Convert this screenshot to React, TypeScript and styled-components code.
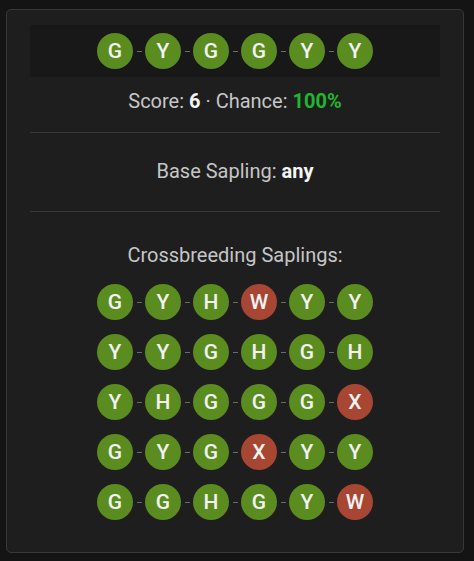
import * as React from "react";
import styled, { createGlobalStyle } from "styled-components";

const GlobalStyle = createGlobalStyle`
  html, body {
    margin: 0;
    padding: 0;
    background: #141414;
  }
  body {
    font-family: Roboto, "Liberation Sans", sans-serif;
  }
`;

const Page = styled.div`
  padding: 9px 10px 9px 6px;
  width: 474px;
  height: 561px;
  box-sizing: border-box;
`;

const Card = styled.div`
  background: #1e1e1e;
  border: 1px solid #383838;
  border-radius: 5px;
  padding: 15px 23px 31px;
  box-sizing: border-box;
  height: 544px;
  display: flex;
  flex-direction: column;
  align-items: stretch;
`;

const Strip = styled.div`
  background: #181818;
  height: 52px;
  display: flex;
  align-items: center;
  justify-content: center;
`;

const Chain = styled.div`
  display: flex;
  align-items: center;
  justify-content: center;
`;

const Link = styled.span`
  width: 12px;
  display: flex;
  justify-content: center;

  &::before {
    content: "";
    width: 5px;
    height: 1px;
    background: #6a6a6a;
  }
`;

type GeneProps = { $bad: boolean };

const Gene = styled.span<GeneProps>`
  width: 36px;
  height: 36px;
  border-radius: 50%;
  background: ${p => (p.$bad ? "#a84634" : "#5b8c1f")};
  color: #f2f2f2;
  font-size: 21px;
  font-weight: 500;
  display: flex;
  align-items: center;
  justify-content: center;
  line-height: 1;
`;

const Line = styled.div<{ $top: number }>`
  margin-top: ${p => p.$top}px;
  text-align: center;
  font-size: 20px;
  line-height: 24px;
  color: #c6c6c6;

  b {
    color: #f4f4f4;
    font-weight: 700;
  }
`;

const Good = styled.b`
  && {
    color: #22b52f;
  }
`;

const Divider = styled.hr<{ $top: number }>`
  margin: ${p => p.$top}px 0 0;
  border: 0;
  height: 1px;
  background: #383838;
`;

const Rows = styled.div`
  margin-top: 17px;
  display: flex;
  flex-direction: column;
  gap: 14px;
`;

const GeneChain = ({ genes }: { genes: string }) => (
  <Chain>
    {genes.split("").map((g, i) => (
      <React.Fragment key={i}>
        {i > 0 && <Link />}
        <Gene $bad={g === "W" || g === "X"}>{g}</Gene>
      </React.Fragment>
    ))}
  </Chain>
);

const crossbreeds = ["GYHWYY", "YYGHGH", "YHGGGX", "GYGXYY", "GGHGYW"];

const App = () => (
  <>
    <GlobalStyle />
    <Page>
      <Card>
        <Strip>
          <GeneChain genes="GYGGYY" />
        </Strip>
        <Line $top={12}>
          Score: <b>6</b> · Chance: <Good>100%</Good>
        </Line>
        <Divider $top={19} />
        <Line $top={26}>
          Base Sapling: <b>any</b>
        </Line>
        <Divider $top={28} />
        <Line $top={31}>Crossbreeding Saplings:</Line>
        <Rows>
          {crossbreeds.map(c => (
            <GeneChain key={c} genes={c} />
          ))}
        </Rows>
      </Card>
    </Page>
  </>
);

export default App;
